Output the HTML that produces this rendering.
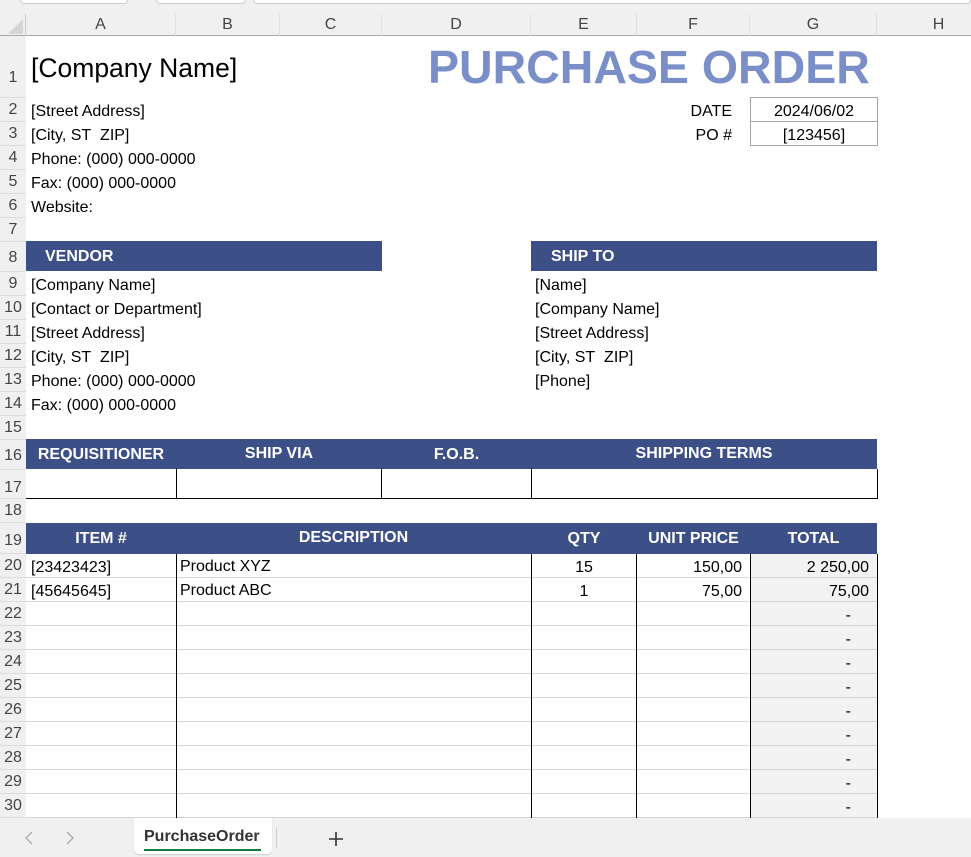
<!DOCTYPE html>
<html><head><meta charset="utf-8"><style>
*{margin:0;padding:0;box-sizing:border-box}
body{width:971px;height:857px;overflow:hidden;background:#fff;font-family:"Liberation Sans",Arial,sans-serif;position:relative;color:#000}
.a{position:absolute;white-space:nowrap}
.t{font-size:16px;line-height:24px;margin-top:2px}
.ch{position:absolute;top:14px;height:22px;font-size:16px;color:#444;text-align:center;line-height:22px;border-right:1px solid #e0e0e0}
.rh{position:absolute;left:0;width:26px;font-size:16px;color:#444;text-align:center;background:#f0f0f0;border-bottom:1px solid #ddd}
.bar{position:absolute;background:#3d4f87;color:#fff;font-weight:bold;font-size:16px}
.vl{position:absolute;width:1px;background:#000}
.hl{position:absolute;height:1px;background:#d4d4d4}
</style></head><body>
<div class="a" style="left:0;top:0;width:971px;height:14px;background:#f0f0f0"></div>
<div class="a" style="left:20px;top:0;width:108px;height:4px;background:#fff;border:1px solid #ccc;border-top:0;border-radius:0 0 5px 5px"></div>
<div class="a" style="left:156px;top:0;width:90px;height:4px;background:#fff;border:1px solid #ccc;border-top:0;border-radius:0 0 5px 5px"></div>
<div class="a" style="left:253px;top:0;width:718px;height:4px;background:#fff;border:1px solid #ccc;border-top:0;border-radius:0 0 5px 5px"></div>
<div class="a" style="left:0;top:14px;width:971px;height:22px;background:#f0f0f0;border-bottom:1px solid #a8a8a8"></div>
<div class="a" style="left:0;top:14px;width:26px;height:22px;border-right:1px solid #ccc"></div>
<div class="a" style="left:8px;top:19px;width:0;height:0;border-left:15px solid transparent;border-bottom:15px solid #d6d6d6"></div>
<div class="ch" style="left:26px;width:150px">A</div>
<div class="ch" style="left:176px;width:104px">B</div>
<div class="ch" style="left:280px;width:102px">C</div>
<div class="ch" style="left:382px;width:149px">D</div>
<div class="ch" style="left:531px;width:106px">E</div>
<div class="ch" style="left:637px;width:113px">F</div>
<div class="ch" style="left:750px;width:127px">G</div>
<div class="ch" style="left:877px;width:124px">H</div>
<div class="a" style="left:0;top:36px;width:26px;height:782px;background:#f0f0f0;border-right:1px solid #a8a8a8"></div>
<div class="rh" style="top:36px;height:62px;line-height:84px">1</div>
<div class="rh" style="top:98px;height:24px;line-height:24px">2</div>
<div class="rh" style="top:122px;height:24px;line-height:24px">3</div>
<div class="rh" style="top:146px;height:24px;line-height:24px">4</div>
<div class="rh" style="top:170px;height:24px;line-height:24px">5</div>
<div class="rh" style="top:194px;height:24px;line-height:24px">6</div>
<div class="rh" style="top:218px;height:24px;line-height:24px">7</div>
<div class="rh" style="top:242px;height:30px;line-height:32px">8</div>
<div class="rh" style="top:272px;height:24px;line-height:24px">9</div>
<div class="rh" style="top:296px;height:24px;line-height:24px">10</div>
<div class="rh" style="top:320px;height:24px;line-height:24px">11</div>
<div class="rh" style="top:344px;height:24px;line-height:24px">12</div>
<div class="rh" style="top:368px;height:24px;line-height:24px">13</div>
<div class="rh" style="top:392px;height:24px;line-height:24px">14</div>
<div class="rh" style="top:416px;height:24px;line-height:24px">15</div>
<div class="rh" style="top:440px;height:30px;line-height:32px">16</div>
<div class="rh" style="top:470px;height:29px;line-height:36px">17</div>
<div class="rh" style="top:499px;height:24px;line-height:24px">18</div>
<div class="rh" style="top:523px;height:31px;line-height:36px">19</div>
<div class="rh" style="top:554px;height:24px;line-height:24px">20</div>
<div class="rh" style="top:578px;height:24px;line-height:24px">21</div>
<div class="rh" style="top:602px;height:24px;line-height:24px">22</div>
<div class="rh" style="top:626px;height:24px;line-height:24px">23</div>
<div class="rh" style="top:650px;height:24px;line-height:24px">24</div>
<div class="rh" style="top:674px;height:24px;line-height:24px">25</div>
<div class="rh" style="top:698px;height:24px;line-height:24px">26</div>
<div class="rh" style="top:722px;height:24px;line-height:24px">27</div>
<div class="rh" style="top:746px;height:24px;line-height:24px">28</div>
<div class="rh" style="top:770px;height:24px;line-height:24px">29</div>
<div class="rh" style="top:794px;height:24px;line-height:24px">30</div>

<div class="a" style="left:31px;top:52px;font-size:26.5px;line-height:32px">[Company Name]</div>
<div class="a" style="left:428px;top:40px;font-size:46.5px;font-weight:bold;color:#7a8fc7;line-height:54px">PURCHASE ORDER</div>
<div class="a t" style="left:31px;top:98px">[Street Address]</div>
<div class="a t" style="left:31px;top:122px">[City, ST&nbsp; ZIP]</div>
<div class="a t" style="left:31px;top:146px">Phone: (000) 000-0000</div>
<div class="a t" style="left:31px;top:170px">Fax: (000) 000-0000</div>
<div class="a t" style="left:31px;top:194px">Website:</div>
<div class="a t" style="left:637px;width:95px;text-align:right;top:98px">DATE</div>
<div class="a t" style="left:637px;width:95px;text-align:right;top:122px">PO #</div>
<div class="a" style="left:750px;top:97px;width:128px;height:49px;border:1px solid #a6a6a6"></div>
<div class="a" style="left:750px;top:121px;width:128px;height:1px;background:#a6a6a6"></div>
<div class="a t" style="left:750px;width:128px;text-align:center;top:98px">2024/06/02</div>
<div class="a t" style="left:750px;width:128px;text-align:center;top:122px">[123456]</div>

<div class="bar" style="left:26px;top:241px;width:356px;height:30px;line-height:32px;padding-left:19px">VENDOR</div>
<div class="bar" style="left:531px;top:241px;width:346px;height:30px;line-height:32px;padding-left:20px">SHIP TO</div>
<div class="a t" style="left:31px;top:272px">[Company Name]</div>
<div class="a t" style="left:31px;top:296px">[Contact or Department]</div>
<div class="a t" style="left:31px;top:320px">[Street Address]</div>
<div class="a t" style="left:31px;top:344px">[City, ST&nbsp; ZIP]</div>
<div class="a t" style="left:31px;top:368px">Phone: (000) 000-0000</div>
<div class="a t" style="left:31px;top:392px">Fax: (000) 000-0000</div>
<div class="a t" style="left:535px;top:272px">[Name]</div>
<div class="a t" style="left:535px;top:296px">[Company Name]</div>
<div class="a t" style="left:535px;top:320px">[Street Address]</div>
<div class="a t" style="left:535px;top:344px">[City, ST&nbsp; ZIP]</div>
<div class="a t" style="left:535px;top:368px">[Phone]</div>

<div class="bar" style="left:26px;top:439px;width:851px;height:30px"></div>
<div class="bar" style="left:26px;top:439px;width:150px;height:30px;line-height:32px;text-align:center;background:none">REQUISITIONER</div>
<div class="bar" style="left:176px;top:439px;width:206px;height:30px;line-height:30px;text-align:center;background:none">SHIP VIA</div>
<div class="bar" style="left:382px;top:439px;width:149px;height:30px;line-height:32px;text-align:center;background:none">F.O.B.</div>
<div class="bar" style="left:531px;top:439px;width:346px;height:30px;line-height:30px;text-align:center;background:none">SHIPPING TERMS</div>
<div class="vl" style="left:176px;top:469px;height:30px"></div>
<div class="vl" style="left:381px;top:469px;height:30px"></div>
<div class="vl" style="left:531px;top:469px;height:30px"></div>
<div class="vl" style="left:877px;top:469px;height:30px"></div>
<div class="a" style="left:26px;top:498px;width:852px;height:1px;background:#000"></div>

<div class="a" style="left:751px;top:554px;width:126px;height:264px;background:#f2f2f2"></div>
<div class="bar" style="left:26px;top:523px;width:851px;height:31px"></div>
<div class="bar" style="left:26px;top:523px;width:150px;height:31px;line-height:32px;text-align:center;background:none">ITEM #</div>
<div class="bar" style="left:176px;top:523px;width:355px;height:31px;line-height:30px;text-align:center;background:none">DESCRIPTION</div>
<div class="bar" style="left:531px;top:523px;width:106px;height:31px;line-height:32px;text-align:center;background:none">QTY</div>
<div class="bar" style="left:637px;top:523px;width:113px;height:31px;line-height:32px;text-align:center;background:none">UNIT PRICE</div>
<div class="bar" style="left:750px;top:523px;width:127px;height:31px;line-height:32px;text-align:center;background:none">TOTAL</div>
<div class="hl" style="left:26px;top:577px;width:851px"></div>
<div class="hl" style="left:26px;top:601px;width:851px"></div>
<div class="hl" style="left:26px;top:625px;width:851px"></div>
<div class="hl" style="left:26px;top:649px;width:851px"></div>
<div class="hl" style="left:26px;top:673px;width:851px"></div>
<div class="hl" style="left:26px;top:697px;width:851px"></div>
<div class="hl" style="left:26px;top:721px;width:851px"></div>
<div class="hl" style="left:26px;top:745px;width:851px"></div>
<div class="hl" style="left:26px;top:769px;width:851px"></div>
<div class="hl" style="left:26px;top:793px;width:851px"></div>
<div class="hl" style="left:26px;top:817px;width:851px"></div>
<div class="vl" style="left:176px;top:554px;height:264px"></div>
<div class="vl" style="left:531px;top:554px;height:264px"></div>
<div class="vl" style="left:636px;top:554px;height:264px"></div>
<div class="vl" style="left:750px;top:554px;height:264px"></div>
<div class="vl" style="left:877px;top:554px;height:264px"></div>
<div class="a t" style="left:31px;top:554px">[23423423]</div>
<div class="a t" style="left:31px;top:578px">[45645645]</div>
<div class="a t" style="left:180px;top:553px">Product XYZ</div>
<div class="a t" style="left:180px;top:577px">Product ABC</div>
<div class="a t" style="left:531px;width:106px;text-align:center;top:554px">15</div>
<div class="a t" style="left:531px;width:106px;text-align:center;top:578px">1</div>
<div class="a t" style="left:637px;width:105px;text-align:right;top:554px">150,00</div>
<div class="a t" style="left:637px;width:105px;text-align:right;top:578px">75,00</div>
<div class="a t" style="left:750px;width:119px;text-align:right;top:554px">2 250,00</div>
<div class="a t" style="left:750px;width:119px;text-align:right;top:578px">75,00</div>
<div class="a t" style="left:750px;width:101px;text-align:right;top:602px">-</div>
<div class="a t" style="left:750px;width:101px;text-align:right;top:626px">-</div>
<div class="a t" style="left:750px;width:101px;text-align:right;top:650px">-</div>
<div class="a t" style="left:750px;width:101px;text-align:right;top:674px">-</div>
<div class="a t" style="left:750px;width:101px;text-align:right;top:698px">-</div>
<div class="a t" style="left:750px;width:101px;text-align:right;top:722px">-</div>
<div class="a t" style="left:750px;width:101px;text-align:right;top:746px">-</div>
<div class="a t" style="left:750px;width:101px;text-align:right;top:770px">-</div>
<div class="a t" style="left:750px;width:101px;text-align:right;top:794px">-</div>

<div class="a" style="left:0;top:818px;width:971px;height:39px;background:#f0f0f0"></div>
<svg class="a" style="left:22px;top:830px" width="60" height="16"><path d="M10 2 L4 8 L10 14" fill="none" stroke="#aaa" stroke-width="1.3"/><path d="M45 2 L51 8 L45 14" fill="none" stroke="#aaa" stroke-width="1.3"/></svg>
<div class="a" style="left:134px;top:818px;width:138px;height:36px;background:#fff;border-radius:0 0 5px 5px;box-shadow:0 1px 1px #ccc"></div>
<div class="a" style="left:144px;top:826px;font-size:16px;font-weight:bold;color:#333;line-height:22px">PurchaseOrder</div>
<div class="a" style="left:144px;top:849px;width:117px;height:2px;background:#107c41"></div>
<div class="a" style="left:276px;top:828px;width:1px;height:20px;background:#ccc"></div>
<svg class="a" style="left:328px;top:831px" width="16" height="16"><path d="M8 1 V15 M1 8 H15" stroke="#333" stroke-width="1.6"/></svg>
</body></html>
